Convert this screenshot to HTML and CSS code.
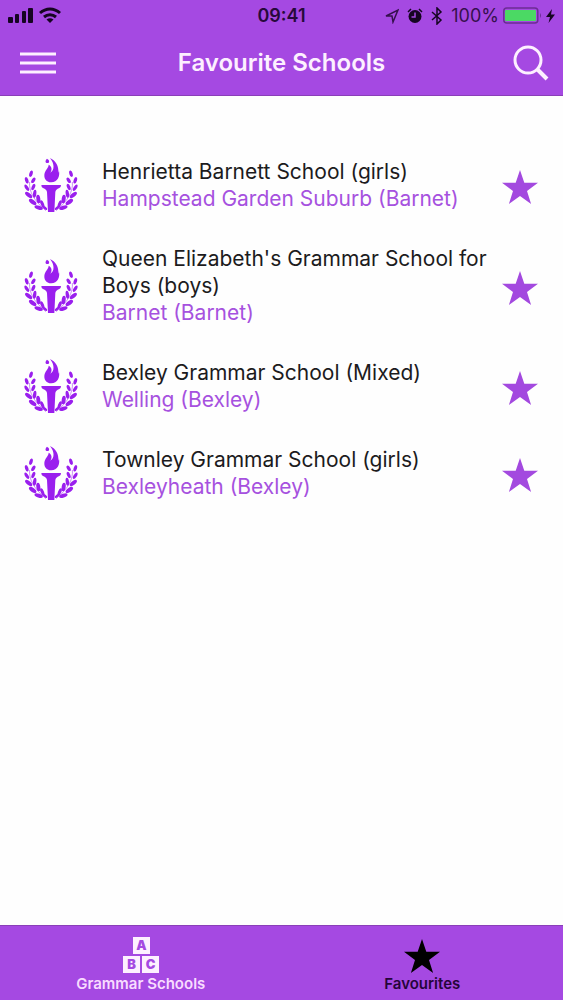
FILE: index.html
```
<!DOCTYPE html>
<html lang="en">
<head>
<meta charset="utf-8">
<meta name="viewport" content="width=device-width, initial-scale=1">
<title>Favourite Schools</title>
<link rel="stylesheet" href="styles.css">
</head>
<body>
<svg class="sprite" aria-hidden="true">
  <symbol id="star" viewBox="0 0 36 34">
    <path d="M18 0L22.3 12.8H36L25 20.9L29.1 34L18 26.1L6.9 34L11 20.9L0 12.8H13.7Z"/>
  </symbol>
  <symbol id="branch" viewBox="0 0 160 162">
    <path d="M16 72C13 98 28 128 65 158" fill="none" stroke="#9a1fee" stroke-width="1.500"/>
    <ellipse cx="20" cy="47" rx="5" ry="10" transform="rotate(16 20 47)"/>
    <ellipse cx="7" cy="67" rx="5" ry="10" transform="rotate(-18 7 67)"/>
    <ellipse cx="27" cy="67" rx="5" ry="9" transform="rotate(32 27 67)"/>
    <ellipse cx="7" cy="89" rx="5" ry="11" transform="rotate(-35 7 89)"/>
    <ellipse cx="27" cy="87" rx="5" ry="10" transform="rotate(22 27 87)"/>
    <ellipse cx="13" cy="111" rx="6" ry="13" transform="rotate(-50 13 111)"/>
    <ellipse cx="31" cy="107" rx="5" ry="12" transform="rotate(8 31 107)"/>
    <ellipse cx="25" cy="132" rx="6" ry="13" transform="rotate(-55 25 132)"/>
    <ellipse cx="42" cy="123" rx="6" ry="13" transform="rotate(-8 42 123)"/>
    <ellipse cx="43" cy="149" rx="6" ry="13" transform="rotate(-72 43 149)"/>
    <ellipse cx="54" cy="138" rx="5" ry="12" transform="rotate(-22 54 138)"/>
    <ellipse cx="62" cy="150" rx="4" ry="8" transform="rotate(-50 62 150)"/>
  </symbol>
  <symbol id="torch" viewBox="0 0 160 162">
    <use href="#branch"/>
    <use href="#branch" transform="translate(160 0) scale(-1 1)"/>
    <path d="M77 0C95 8 104 26 102 44C104 42 104 38 103 34C109 56 99 73 81 73C65 73 57 60 61 45C64 35 73 29 73 20C84 26 83 36 78 44C91 37 91 17 77 0Z"/>
    <path d="M68 2C78 7 75 17 67 15C61 12 64 6 68 2Z"/>
    <path d="M51 81H110Q110 88 105 90Q94 94 93 102L90 162H71L68 102Q67 94 56 90Q51 88 51 81Z"/>
  </symbol>
</svg>
<div class="app">
  <header class="header">
    <div class="status">
      <div class="status-left">
        <svg width="54" height="18" viewBox="0 0 54 18" aria-label="Signal and Wi-Fi">
          <rect x="0" y="10" width="5" height="6" rx="1"/>
          <rect x="7" y="7" width="4" height="9" rx="1"/>
          <rect x="14" y="4" width="4" height="12" rx="1"/>
          <rect x="20" y="1" width="5" height="15" rx="1"/>
          <g fill="none" stroke="#160522" stroke-width="3">
            <path d="M32 6C38 .5 46 .5 52 6"/>
            <path d="M36 10C39.500 7 44.500 7 48 10"/>
          </g>
          <path d="M38.500 12.500Q42 10 45.500 12.500L42 16Z"/>
        </svg>
      </div>
      <span class="time">09:41</span>
      <div class="status-right">
        <svg width="14" height="16" viewBox="0 0 14 16"><path d="M1 8L13 2L8 14L7 8Z" fill="none" stroke="#35104d" stroke-width="1.500"/></svg>
        <svg width="16" height="16" viewBox="0 0 16 16">
          <circle cx="8" cy="8.500" r="6.500"/>
          <path d="M1 4L4 1M12 1L15 4" stroke="#160522" stroke-width="1.500"/>
          <path d="M8 4.500V9H4.500" fill="none" stroke="#a549e2" stroke-width="1.500"/>
        </svg>
        <svg width="12" height="18" viewBox="0 0 12 18"><path d="M1 5L10 13L6 17V1L10 5L1 13" fill="none" stroke="#160522" stroke-width="1.500"/></svg>
        <span class="percent">100%</span>
        <svg width="39" height="18" viewBox="0 0 39 18" aria-label="Battery charged">
          <rect x=".8" y="1" width="34" height="15" rx="3" fill="none" stroke="#6c2c94" stroke-width="1.500"/>
          <rect x="2" y="3" width="31" height="11" rx="1" fill="#4bd964"/>
          <path d="M37 6Q39 8.500 37 11Z" fill="#6c2c94"/>
        </svg>
        <svg class="bolt" width="9" height="16" viewBox="0 0 9 16"><path d="M6 1L0 9H4L2.500 15L9 6.500H5Z"/></svg>
      </div>
    </div>
    <div class="navbar">
      <button class="icon-button menu" type="button" aria-label="Menu">
        <svg width="36" height="22" viewBox="0 0 36 22" fill="none" stroke="#fdf0ff" stroke-width="3"><path d="M0 2H36M0 11H36M0 20H36"/></svg>
      </button>
      <h1 class="title">Favourite Schools</h1>
      <button class="icon-button search" type="button" aria-label="Search">
        <svg width="36" height="36" viewBox="0 0 36 36" fill="none" stroke="#fdf0ff"><circle cx="15" cy="15" r="13" stroke-width="3"/><path d="M24 24L34 34" stroke-width="4"/></svg>
      </button>
    </div>
  </header>
  <main class="content">
    <ul class="schools">
      <li class="school">
        <svg class="crest" aria-hidden="true"><use href="#torch"/></svg>
        <div class="details"><h2 class="name">Henrietta Barnett School (girls)</h2><p class="place">Hampstead Garden Suburb (Barnet)</p></div>
        <button class="icon-button favourite" type="button" aria-label="Remove Henrietta Barnett School"><svg class="star"><use href="#star"/></svg></button>
      </li>
      <li class="school">
        <svg class="crest" aria-hidden="true"><use href="#torch"/></svg>
        <div class="details"><h2 class="name">Queen Elizabeth's Grammar School for Boys (boys)</h2><p class="place">Barnet (Barnet)</p></div>
        <button class="icon-button favourite" type="button" aria-label="Remove Queen Elizabeth's Grammar School"><svg class="star"><use href="#star"/></svg></button>
      </li>
      <li class="school">
        <svg class="crest" aria-hidden="true"><use href="#torch"/></svg>
        <div class="details"><h2 class="name">Bexley Grammar School (Mixed)</h2><p class="place">Welling (Bexley)</p></div>
        <button class="icon-button favourite" type="button" aria-label="Remove Bexley Grammar School"><svg class="star"><use href="#star"/></svg></button>
      </li>
      <li class="school">
        <svg class="crest" aria-hidden="true"><use href="#torch"/></svg>
        <div class="details"><h2 class="name">Townley Grammar School (girls)</h2><p class="place">Bexleyheath (Bexley)</p></div>
        <button class="icon-button favourite" type="button" aria-label="Remove Townley Grammar School"><svg class="star"><use href="#star"/></svg></button>
      </li>
    </ul>
  </main>
  <nav class="tabs">
    <a class="tab" href="#schools">
      <svg width="36" height="36" viewBox="0 0 36 36" aria-hidden="true">
        <g fill="#fdf0ff"><rect x="10" y="0" width="17" height="17"/><rect x="0" y="19" width="17" height="17"/><rect x="19" y="19" width="17" height="17"/></g>
        <g class="block-letters"><text x="18.500" y="13">A</text><text x="8.500" y="32">B</text><text x="27.500" y="32">C</text></g>
      </svg>
      <span>Grammar Schools</span>
    </a>
    <a class="tab active" href="#favourites" aria-current="page">
      <svg class="tab-star" aria-hidden="true"><use href="#star"/></svg>
      <span>Favourites</span>
    </a>
  </nav>
</div>
</body>
</html>
```
FILE: styles.css
```
* {
  box-sizing: border-box;
}

body {
  margin: 0;
  font-family: Inter, "Liberation Sans", sans-serif;
  background: #fefefe;
  color: #1c1b1d;
}

.sprite {
  position: absolute;
  width: 0;
  height: 0;
}

svg {
  display: block;
  flex: none;
}

.app {
  display: flex;
  flex-direction: column;
  min-height: 100vh;
}

.header {
  background: #a549e2;
  border-bottom: 1px solid #8a3fb8;
}

.status {
  display: grid;
  grid-template-columns: 1fr auto 1fr;
  align-items: center;
  height: 31px;
  padding: 0 8px;
  color: #35104d;
  fill: #160522;
}

.time {
  font-size: 18px;
  font-weight: 600;
  color: #27093b;
}

.status-right {
  display: flex;
  align-items: center;
  justify-content: flex-end;
  gap: 8px;
}

.percent {
  font-size: 18px;
}

.status-right .percent + svg {
  margin-left: -4px;
}

.bolt {
  margin-left: -4px;
}

.navbar {
  display: grid;
  grid-template-columns: 1fr auto 1fr;
  align-items: center;
  height: 64px;
  padding: 0 14px;
}

.title {
  margin: 0;
  font-size: 24px;
  line-height: 32px;
  font-weight: 600;
  color: #fdf0ff;
}

.icon-button {
  padding: 0;
  border: 0;
  background: none;
  cursor: pointer;
}

.menu {
  justify-self: start;
  padding-left: 6px;
}

.search {
  justify-self: end;
}

.content {
  flex: 1;
  padding: 62px 24px 32px;
}

.schools {
  display: flex;
  flex-direction: column;
  gap: 33px;
  margin: 0;
  padding: 0;
  list-style: none;
}

.school {
  display: flex;
  align-items: center;
}

.crest {
  width: 54px;
  height: 54px;
  margin-right: 24px;
  fill: #9a1fee;
}

.details {
  flex: 1;
  padding-right: 14px;
  font-size: 21px;
  line-height: 27px;
}

.name,
.place {
  margin: 0;
  font-size: inherit;
  font-weight: 400;
}

.place {
  color: #a651df;
}

.favourite {
  padding-top: 4px;
  padding-right: 1px;
}

.star {
  width: 36px;
  height: 34px;
  fill: #a349df;
}

.tabs {
  display: flex;
  height: 75px;
  border-top: 1px solid #8a3fb8;
  background: #a549e2;
}

.tab {
  display: flex;
  flex: 1;
  flex-direction: column;
  align-items: center;
  justify-content: flex-end;
  gap: 2px;
  padding-bottom: 7px;
  font-size: 15px;
  line-height: 18px;
  font-weight: 600;
  color: #f8dcff;
  text-decoration: none;
}

.tab.active {
  color: #25053a;
}

.tab-star {
  width: 38px;
  height: 34px;
  fill: #000;
}

.block-letters {
  font-size: 13px;
  font-weight: 900;
  fill: #a549e2;
  text-anchor: middle;
}
```
